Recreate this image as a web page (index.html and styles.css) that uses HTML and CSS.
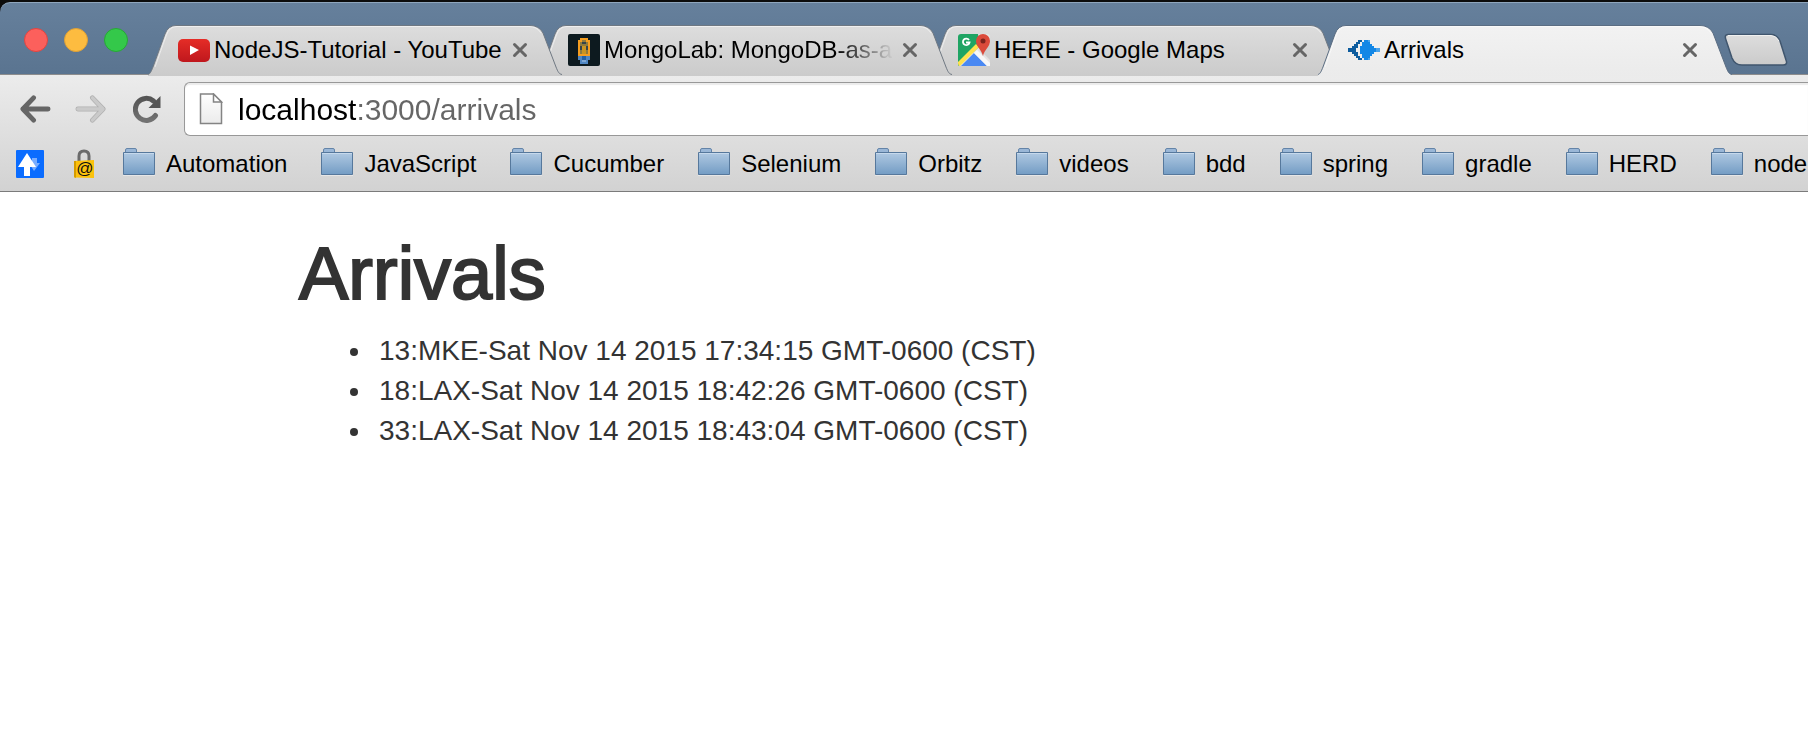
FILE: index.html
```html
<!DOCTYPE html>
<html lang="en">
<head>
<meta charset="utf-8">
<title>Arrivals</title>
<link rel="stylesheet" href="styles.css">
</head>
<body>
<svg class="defs" aria-hidden="true">
  <defs>
    <linearGradient id="g-tab" x1="0" y1="0" x2="0" y2="1"><stop offset="0" stop-color="#dddddd"/><stop offset="1" stop-color="#cbcbcb"/></linearGradient>
    <linearGradient id="g-active" x1="0" y1="0" x2="0" y2="1"><stop offset="0" stop-color="#f2f2f2"/><stop offset="1" stop-color="#ebebeb"/></linearGradient>
    <linearGradient id="g-folder" x1="0" y1="0" x2="0" y2="1"><stop offset="0" stop-color="#b0c9e2"/><stop offset="1" stop-color="#739cc4"/></linearGradient>
    <linearGradient id="g-page" x1="0" y1="0" x2="0" y2="1"><stop offset="0" stop-color="#ffffff"/><stop offset="1" stop-color="#ebebeb"/></linearGradient>
    <linearGradient id="g-yt" x1="0" y1="0" x2="0" y2="1"><stop offset="0" stop-color="#e52d27"/><stop offset="1" stop-color="#bf171d"/></linearGradient>
    <linearGradient id="g-glyph" x1="0" y1="0" x2="0" y2="1"><stop offset="0" stop-color="#555555"/><stop offset="1" stop-color="#727272"/></linearGradient>
  </defs>
  <symbol id="tab-shape" viewBox="0 0 418 51" preserveAspectRatio="none">
    <path d="M0 49.500C2 49 3 47 5 42L17 9Q20 .5 28 .5H382Q391 .5 395 8L408 42C410 47 411 49 414 49.500V51H0Z" stroke="none"/>
    <path d="M0 49.500C2 49 3 47 5 42L17 9Q20 .5 28 .5H382Q391 .5 395 8L408 42C410 47 411 49 414 49.500" fill="none"/>
    <path d="M7 42L18 11Q21 1.500 29 1.500H381Q389 1.500 393 8" fill="none" stroke="#fff" stroke-opacity=".55"/>
  </symbol>
  <symbol id="folder" viewBox="0 0 32 28">
    <path d="M2.500 5V2Q2.500 .5 4 .5H12Q13.500 .5 13.500 2V5" fill="#9ab7d7" stroke="#6484a8"/>
    <path d="M.5 4.500H31.500V26.500H.5Z" fill="url(#g-folder)" stroke="#56789c"/>
    <path d="M1 5.500H31" stroke="#c6d9ec"/>
    <path d="M0 27.500H32" stroke="#f2f2f2" stroke-opacity=".6"/>
  </symbol>
  <symbol id="cross" viewBox="0 0 16 16">
    <path d="M2.500 2.500L13.500 13.500M13.500 2.500L2.500 13.500" fill="none" stroke="#666" stroke-width="3" stroke-linecap="round"/>
  </symbol>
</svg>

<header class="browser">
  <div class="titlebar">
    <div class="lights">
      <button class="light light-close" aria-label="Close window"></button>
      <button class="light light-min" aria-label="Minimize window"></button>
      <button class="light light-max" aria-label="Zoom window"></button>
    </div>
    <nav class="tabs" aria-label="Tabs">
      <div class="tab tab-first">
        <svg class="tab-bg" aria-hidden="true"><use href="#tab-shape"/></svg>
        <svg class="favicon" viewBox="0 0 32 32" aria-hidden="true"><rect y="5" width="32" height="23" rx="5" fill="url(#g-yt)"/><path d="M12 11.500L21 16L12 21Z" fill="#fff"/></svg>
        <span class="tab-title">NodeJS-Tutorial - YouTube</span>
        <button class="tab-close" aria-label="Close tab"><svg viewBox="0 0 16 16"><use href="#cross"/></svg></button>
      </div>
      <div class="tab tab-second">
        <svg class="tab-bg" aria-hidden="true"><use href="#tab-shape"/></svg>
        <svg class="favicon" viewBox="0 0 16 16" aria-hidden="true"><rect width="16" height="16" rx="1" fill="#0d1a1f"/><g shape-rendering="crispEdges"><path d="M6 2H10V3H11V11H5V3H6Z" fill="#f49d20"/><path d="M6 4H7V3H9V4H10V10H6Z" fill="#8f7a3c"/><path d="M7 4H9V5H7ZM6 6H7V8H6ZM9 6H10V8H9Z" fill="#34424a"/><path d="M7 6H9V10H7Z" fill="#c99422"/><path d="M5 11H11V13H10V15H6V13H5Z" fill="#4f86c2"/><path d="M7 11H9V13H7Z" fill="#2260a6"/><path d="M7 13H9V14H7Z" fill="#7da6d3"/></g></svg>
        <span class="tab-title tab-title-faded">MongoLab: MongoDB-as-a</span>
        <button class="tab-close" aria-label="Close tab"><svg viewBox="0 0 16 16"><use href="#cross"/></svg></button>
      </div>
      <div class="tab tab-third">
        <svg class="tab-bg" aria-hidden="true"><use href="#tab-shape"/></svg>
        <svg class="favicon" viewBox="0 0 32 32" aria-hidden="true"><rect width="32" height="32" rx="3" fill="#e4e4e4"/><path d="M3 0H20L22 12L0 32V3Q0 0 3 0Z" fill="#1fa463"/><path d="M0 28L18 10L21 13L2 32Q0 32 0 29Z" fill="#ffe14d"/><path d="M3 32L16 19L29 32Z" fill="#4a89f3"/><path d="M16 19L19 16L32 29V32H29Z" fill="#f7f7f7"/><path d="M21 15L25 22V10H32V26Z" fill="#cfcfcf"/><path d="M25 22C24 16 18 13 18 7A7 7 0 0 1 32 7C32 13 26 16 25 22Z" fill="#db4a3b"/><circle cx="25" cy="7" r="2.500" fill="#7b231d"/><path d="M11 6A3.300 3.300 0 1 0 11.500 8.500H8" fill="none" stroke="#fff" stroke-width="1.800"/></svg>
        <span class="tab-title">HERE - Google Maps</span>
        <button class="tab-close" aria-label="Close tab"><svg viewBox="0 0 16 16"><use href="#cross"/></svg></button>
      </div>
      <div class="tab tab-active" aria-current="page">
        <svg class="tab-bg" aria-hidden="true"><use href="#tab-shape"/></svg>
        <svg class="favicon" viewBox="0 0 16 16" shape-rendering="crispEdges" aria-hidden="true"><path d="M5 3H7V4H6V5H5V7H4V9H5V11H6V12H7V13H5V12H4V11H3V10H2V9H0V7H2V6H3V5H4V4H5Z" fill="#0d5c9e"/><path d="M8 3H10V4H11V5H12V6H13V7H16V9H13V10H12V11H11V12H10V13H8V12H7V10H6V6H7V4H8Z" fill="#1287e6"/><path d="M10 3H11V4H10ZM10 12H11V13H10ZM14 7H16V9H14Z" fill="#4aa3ea"/></svg>
        <span class="tab-title">Arrivals</span>
        <button class="tab-close" aria-label="Close tab"><svg viewBox="0 0 16 16"><use href="#cross"/></svg></button>
      </div>
      <button class="new-tab" aria-label="New tab">
        <svg viewBox="0 0 64 34"><path d="M4 1.500H47Q53 1.500 56 8L62 27Q64 32 59 32H18Q11 32 8 25L2 7Q0 1.500 4 1.500Z" fill="url(#g-tab)" stroke="#40566e" stroke-width="1.500"/><path d="M4 2.500H47Q52 2.500 55 8" fill="none" stroke="#f0f0f0"/></svg>
      </button>
    </nav>
  </div>

  <div class="chrome">
    <div class="toolbar">
      <div class="nav-buttons">
        <button class="nav-button" aria-label="Back"><svg viewBox="0 0 32 28"><path d="M14 2.500L3 14L14 25.500M3 14H29" fill="none" stroke="#666" stroke-width="5" stroke-linecap="round" stroke-linejoin="round"/></svg></button>
        <button class="nav-button" aria-label="Forward" disabled><svg viewBox="0 0 32 28"><path d="M18 2.500L29 14L18 25.500M29 14H3" fill="none" stroke="#b0b0b0" stroke-width="5" stroke-linecap="round" stroke-linejoin="round"/><path d="M18 2.500L29 14L18 25.500M29 14H3" fill="none" stroke="#cacaca" stroke-width="3.500" stroke-linecap="round" stroke-linejoin="round"/></svg></button>
        <button class="nav-button nav-reload" aria-label="Reload"><svg viewBox="0 0 28 28"><path d="M22.500 20.500A11 11 0 1 1 20.500 6" fill="none" stroke="url(#g-glyph)" stroke-width="5" stroke-linecap="round"/><path d="M27.500 1V13H15.500Z" fill="#555"/></svg></button>
      </div>
      <label class="omnibox">
        <svg class="page-icon" viewBox="0 0 24 32" aria-hidden="true"><path d="M1.500 1H14.500L22.500 9V30.500H1.500Z" fill="url(#g-page)" stroke="#848484" stroke-width="1.500"/><path d="M14.500 1V9H22.500Z" fill="#fff" stroke="#848484" stroke-width="1.500"/></svg>
        <input class="url" type="text" value="localhost:3000/arrivals" aria-label="Address">
      </label>
    </div>
    <nav class="bookmarks" aria-label="Bookmarks">
      <a class="app" href="#" aria-label="Transfers"><svg class="app-icon" viewBox="0 0 28 28"><rect width="28" height="28" rx="1" fill="#0a6cff"/><path d="M16 8H21V13H24L18 21L13 13H16Z" fill="#79adff"/><path d="M11 3L20 17H14V26H8V17H2Z" fill="#fff"/></svg></a>
      <a class="app app-last" href="#" aria-label="Mail lock"><svg class="app-icon app-lock" viewBox="0 0 24 30"><path d="M6 12V7Q6 2 11 2T16 7V12" fill="none" stroke="#6b6b6b" stroke-width="3"/><path d="M1 12L21 11V29L1 28.500Z" fill="#fcc20c"/><path d="M1 12L3 12V29L1 28Z" fill="#d69c00"/><text class="at" x="12" y="25" text-anchor="middle">@</text></svg></a>
      <a class="bookmark" href="#"><svg class="folder" aria-hidden="true"><use href="#folder"/></svg>Automation</a>
      <a class="bookmark" href="#"><svg class="folder" aria-hidden="true"><use href="#folder"/></svg>JavaScript</a>
      <a class="bookmark" href="#"><svg class="folder" aria-hidden="true"><use href="#folder"/></svg>Cucumber</a>
      <a class="bookmark" href="#"><svg class="folder" aria-hidden="true"><use href="#folder"/></svg>Selenium</a>
      <a class="bookmark" href="#"><svg class="folder" aria-hidden="true"><use href="#folder"/></svg>Orbitz</a>
      <a class="bookmark" href="#"><svg class="folder" aria-hidden="true"><use href="#folder"/></svg>videos</a>
      <a class="bookmark" href="#"><svg class="folder" aria-hidden="true"><use href="#folder"/></svg>bdd</a>
      <a class="bookmark" href="#"><svg class="folder" aria-hidden="true"><use href="#folder"/></svg>spring</a>
      <a class="bookmark" href="#"><svg class="folder" aria-hidden="true"><use href="#folder"/></svg>gradle</a>
      <a class="bookmark" href="#"><svg class="folder" aria-hidden="true"><use href="#folder"/></svg>HERD</a>
      <a class="bookmark" href="#"><svg class="folder" aria-hidden="true"><use href="#folder"/></svg>node</a>
    </nav>
  </div>
</header>

<main class="page">
  <h1 class="heading">Arrivals</h1>
  <ul class="arrivals">
    <li>13:MKE-Sat Nov 14 2015 17:34:15 GMT-0600 (CST)</li>
    <li>18:LAX-Sat Nov 14 2015 18:42:26 GMT-0600 (CST)</li>
    <li>33:LAX-Sat Nov 14 2015 18:43:04 GMT-0600 (CST)</li>
  </ul>
</main>
</body>
</html>
```

FILE: styles.css
```css
* { box-sizing: border-box; }

body {
  margin: 0;
  background: #fff;
  color: #333;
  font-family: "Liberation Sans", Arial, sans-serif;
  overflow-x: hidden;
}

button {
  padding: 0;
  border: 0;
  background: none;
}

.defs { position: absolute; width: 0; height: 0; }

.browser { background: #0c0c0c; padding-top: 2px; overflow: hidden; }

/* Title bar and tabs */
.titlebar {
  display: flex;
  align-items: flex-end;
  gap: 20px;
  padding: 22px 0 0 24px;
  border-top: 1px solid #8fa6bd;
  border-top-left-radius: 10px;
  background: linear-gradient(#66809c, #5a7490);
}

.lights { display: flex; gap: 16px; width: 104px; padding-bottom: 22px; }

.light { flex: none; width: 24px; height: 24px; border: 1px solid; border-radius: 50%; }
.light-close { background: #fc605c; border-color: #e2443f; }
.light-min { background: #fdbc40; border-color: #dfa035; }
.light-max { background: #34c84a; border-color: #27a835; }

.tabs { display: flex; flex: 1; min-width: 0; }

.tab {
  position: relative;
  display: flex;
  align-items: center;
  flex: 0 0 418px;
  min-width: 0;
  height: 49px;
  margin-right: -28px;
  padding: 1px 26px 0 30px;
  fill: url(#g-tab);
  stroke: #6f7882;
}
.tab-first { z-index: 4; }
.tab-second { z-index: 3; }
.tab-third { z-index: 2; }
.tab-active { z-index: 5; margin-right: -12px; fill: url(#g-active); stroke: #5b6d82; }

.tab-bg { position: absolute; left: 0; top: 0; width: 100%; height: 51px; }

.favicon { position: relative; flex: none; width: 32px; height: 32px; stroke: none; }

.tab-title {
  position: relative;
  flex: 1;
  min-width: 0;
  margin: 0 8px 0 4px;
  overflow: hidden;
  white-space: nowrap;
  color: #000;
  font-size: 24px;
  line-height: 32px;
}
.tab-title-faded { mask-image: linear-gradient(to right, #000 80%, transparent); }

.tab-close { position: relative; flex: none; width: 16px; height: 16px; margin-right: 12px; }
.tab-close svg { display: block; width: 16px; height: 16px; }

.new-tab { width: 64px; height: 34px; margin-top: 8px; }
.new-tab svg { display: block; width: 64px; height: 34px; }

/* Toolbar */
.chrome {
  border-top: 1px solid #8d8d8d;
  border-bottom: 1px solid #7b7b7b;
  background: linear-gradient(#ececec, #d2d2d2);
}

.toolbar { display: flex; align-items: center; padding-top: 7px; }

.nav-buttons { display: flex; align-items: center; gap: 24px; width: 184px; padding-left: 20px; }
.nav-button { width: 31px; height: 28px; }
.nav-button svg { display: block; width: 100%; height: 100%; }
.nav-reload { width: 28px; margin-left: 3px; }

.omnibox {
  display: flex;
  align-items: center;
  flex: 1;
  min-width: 0;
  height: 54px;
  gap: 15px;
  padding-left: 14px;
  border: 1px solid #989898;
  border-right: 0;
  border-radius: 6px 0 0 6px;
  background: #fff;
  box-shadow: inset 0 2px 1px #ececec;
}
.page-icon { flex: none; width: 24px; height: 32px; }

.url {
  flex: 1;
  min-width: 0;
  padding: 2px 0 0;
  border: 0;
  outline: 0;
  color: transparent;
  background: linear-gradient(to right, #000 118px, #666 118px);
  -webkit-background-clip: text;
  background-clip: text;
  font-family: inherit;
  font-size: 30px;
  line-height: 40px;
}

.bookmarks { display: flex; align-items: center; height: 55px; padding-left: 16px; overflow: hidden; }

.app { display: flex; flex: none; width: 57px; }
.app-last { width: 50px; }
.app-icon { width: 28px; height: 28px; }
.app-lock { width: 24px; height: 30px; }
.at { font-size: 17px; fill: #111; }

.bookmark {
  display: flex;
  align-items: center;
  flex: none;
  gap: 11px;
  margin-right: 34px;
  color: #000;
  font-size: 24px;
  line-height: 32px;
  text-decoration: none;
}
.folder { width: 32px; height: 28px; margin-bottom: 4px; }

/* Page content */
.page { padding: 46px 16% 0 299px; }

/* The outline thickens the regular face to a medium weight. */
.heading { margin: 0; font-size: 74px; font-weight: 400; line-height: 72px; -webkit-text-stroke: 2px #333; }

.arrivals { margin: 21px 0; padding-left: 74px; font-size: 28px; line-height: 40px; }
.arrivals li { padding-left: 6px; }
```
